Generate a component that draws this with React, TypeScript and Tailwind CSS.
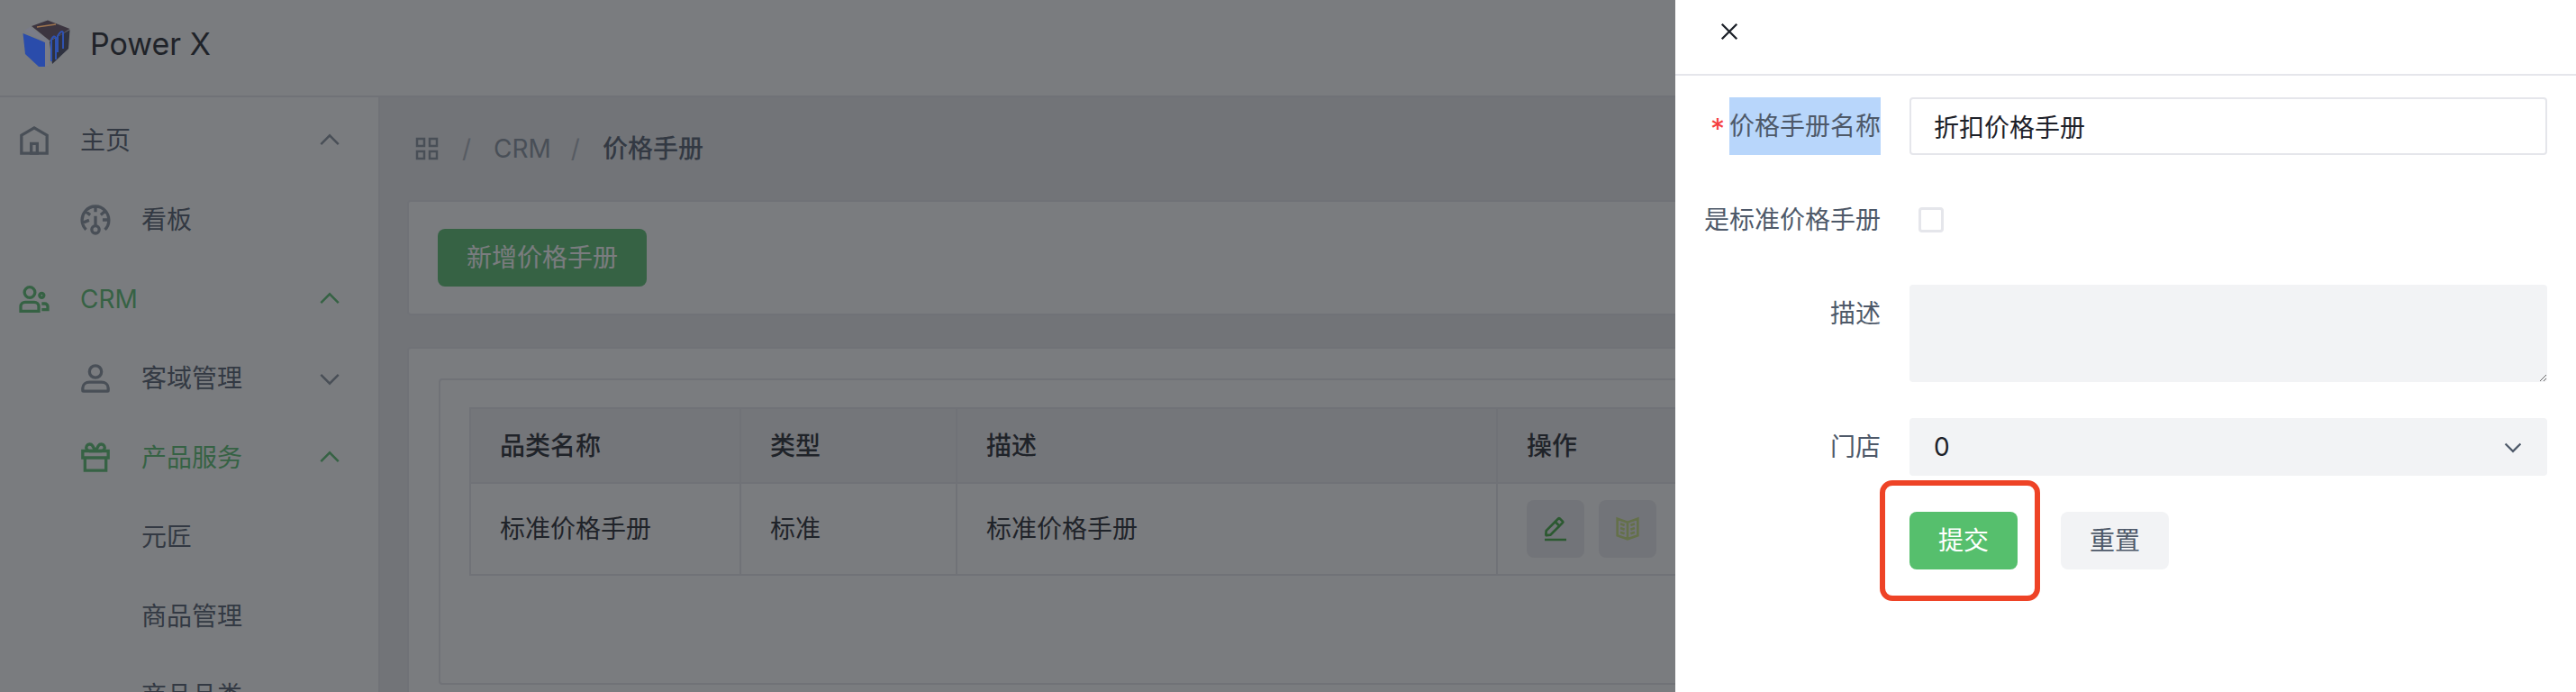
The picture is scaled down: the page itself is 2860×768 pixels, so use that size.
import type { ReactNode } from "react";

// arco-style stroke icons, all drawn on a 48 box
function Icon({ size, className, children }: { size: number; className?: string; children: ReactNode }) {
  return (
    <svg
      width={size}
      height={size}
      viewBox="0 0 48 48"
      fill="none"
      stroke="currentColor"
      strokeWidth={4}
      className={className}
    >
      {children}
    </svg>
  );
}

const HomeIcon = () => (
  <Icon size={40}>
    <path d="M7 17 24 7l17 10v24H7V17Z" />
    <path d="M20 28h8v13h-8V28Z" />
  </Icon>
);
const DashboardIcon = () => (
  <Icon size={40}>
    <path d="M41.8 24c.12 4.63-1.49 9.33-5.2 13m5.2-13h-8.3m8.3 0c-.11-4.38-1.77-8.69-4.62-12M24 6c5.53 0 10.07 2.4 13.18 6M24 6c-5.72 0-10.38 2.57-13.5 6.38M24 6v7.5M37.18 12 31 17.5m-20.5-5.12L17 17.5m-6.5-5.12C6.99 16.66 5.44 22.5 6.53 28m4.87 9c-2.65-2.6-4.22-5.74-4.87-9m0 0 8.97-3.5" />
    <path d="M24 32a5 5 0 1 0 0 10 5 5 0 0 0 0-10Zm0 0V19" />
  </Icon>
);
const UserGroupIcon = () => (
  <Icon size={40}>
    <circle cx="18" cy="15" r="7" />
    <circle cx="34" cy="19" r="3" />
    <path d="M6 34a6 6 0 0 1 6-6h12a6 6 0 0 1 6 6v6H6v-6ZM34 30h4a4 4 0 0 1 4 4v4h-8" />
  </Icon>
);
const UserIcon = () => (
  <Icon size={40}>
    <path d="M7 37c0-4.97 4.03-8 9-8h16c4.97 0 9 3.03 9 8v3a1 1 0 0 1-1 1H8a1 1 0 0 1-1-1v-3Z" />
    <circle cx="24" cy="15" r="8" />
  </Icon>
);
const GiftIcon = () => (
  <Icon size={40}>
    <path d="M7 15h34v9H7v-9ZM10 24v17h28V24" />
    <path d="M24 15h-8a4.5 4.5 0 1 1 4-7l4 7Zm0 0h8a4.5 4.5 0 1 0-4-7l-4 7Z" />
  </Icon>
);
const Chevron = ({ up, size = 30 }: { up?: boolean; size?: number }) => (
  <Icon size={size}>
    <path d={up ? "M39.6 30.557 24.043 15 8.487 30.557" : "M39.6 17.443 24.043 33 8.487 17.443"} />
  </Icon>
);

function Logo() {
  return (
    <svg width={56} height={56} viewBox="24 20 56 56" className="relative z-10 blur-[0.5px]">
      <path d="M35 29 53 22.500 77.500 32 67 39 55 45Z" fill="#3c3540" />
      <path d="M41 30 62 27" stroke="#a0764f" strokeWidth={1.500} />
      <path d="M55 46 77.500 33 76 54 58 71Z" fill="#2f3240" />
      <path d="M57 68V44Q60 38 62 42V66M64 58V40Q68 33 70 36V54" fill="none" stroke="#2f52b0" strokeWidth={2} />
      <path d="M25.500 37 50 47 50 74 43 74 28 60Z" fill="#2a4cab" />
      <path d="M26.500 34 33 30 54 45 54 73 50 74 50 47Z" fill="#7a7c88" />
    </svg>
  );
}

function MenuRow({
  label,
  icon,
  chevron,
  active,
  sub,
}: {
  label: string;
  icon?: ReactNode;
  chevron?: "up" | "down";
  active?: boolean;
  sub?: boolean;
}) {
  return (
    <div
      className={`flex h-[88px] shrink-0 items-center text-[28px] ${active ? "text-[#56bf6d]" : "text-[#4e5969]"} ${
        sub ? "pl-[86px]" : "pl-[18px]"
      }`}
    >
      {icon ? (
        <span className={`mr-[31px] flex shrink-0 ${active ? "text-[#56bf6d]" : "text-[#86909c]"}`}>{icon}</span>
      ) : (
        <span className="w-[71px]" />
      )}
      <span className="flex-1">{label}</span>
      {chevron && (
        <span className={`mr-[39px] flex ${active ? "text-[#56bf6d]" : "text-[#86909c]"}`}>
          <Chevron up={chevron === "up"} />
        </span>
      )}
    </div>
  );
}

function FormRow({ label, required, children }: { label: ReactNode; required?: boolean; children: ReactNode }) {
  return (
    <div className="mb-10 flex gap-8">
      <div className="flex h-16 w-[228px] shrink-0 items-center justify-end text-[28px] text-[#4e5969]">
        {required && <span className="mt-[8px] mr-[5px] text-[32px] leading-none text-[#f53f3f]">*</span>}
        {label}
      </div>
      <div className="min-w-0 flex-1">{children}</div>
    </div>
  );
}

export default function App() {
  return (
    <div className="relative flex h-[768px] w-[2860px] flex-col overflow-hidden bg-white font-['Inter','Noto_Sans_CJK_SC',sans-serif]">
      {/* Page under the drawer */}
      <header className="flex h-[108px] shrink-0 items-center border-b-2 border-[#e5e6eb] pb-[10px] pl-6">
        <Logo />
        <span className="ml-[20px] text-[34px] text-[#1d2129]">Power X</span>
      </header>

      <div className="flex min-h-0 flex-1">
        <aside className="flex w-[422px] shrink-0 flex-col overflow-hidden border-r-2 border-[#e5e6eb] pt-1">
          <MenuRow label="主页" icon={<HomeIcon />} chevron="up" />
          <MenuRow label="看板" icon={<DashboardIcon />} sub />
          <MenuRow label="CRM" icon={<UserGroupIcon />} chevron="up" active />
          <MenuRow label="客域管理" icon={<UserIcon />} chevron="down" sub />
          <MenuRow label="产品服务" icon={<GiftIcon />} chevron="up" active sub />
          <MenuRow label="元匠" sub />
          <MenuRow label="商品管理" sub />
          <MenuRow label="商品品类" sub />
        </aside>

        <main className="min-w-0 flex-1 overflow-hidden bg-[#ebebee] px-[30px]">
          <nav className="flex h-[114px] items-center text-[28px] text-[#86909c]">
            <svg width={26} height={26} viewBox="0 0 26 26" fill="none" stroke="currentColor" strokeWidth={2.500} className="ml-[9px]">
              <path d="M2 2h8v8H2zM16 2h8v8h-8zM2 16h8v8H2zM16 16h8v8h-8z" />
            </svg>
            <span className="ml-[26px] text-[#a9aeb8]">/</span>
            <span className="ml-[25px]">CRM</span>
            <span className="ml-[22px] text-[#a9aeb8]">/</span>
            <span className="ml-[25px] font-medium text-[#4e5969]">价格手册</span>
          </nav>

          <section className="rounded border-2 border-[#e5e6eb] bg-white px-8 py-[30px]">
            <button className="flex h-16 w-[232px] items-center justify-center rounded-lg bg-[#56bf6d] text-[28px] text-white">
              新增价格手册
            </button>
          </section>

          <section className="mt-[35px] h-[500px] rounded border-2 border-[#e5e6eb] bg-white px-[33px] pt-[33px]">
            <div className="h-[340px] rounded border-2 border-[#e5e6eb] px-[32px] pt-[30px]">
              <table className="w-full table-fixed border-collapse text-left text-[28px] text-[#1d2129]">
                <thead>
                  <tr className="h-[83px] bg-[#f0f0f2]">
                    <th className="w-[300px] border-2 border-[#e5e6eb] pl-[32px] font-medium">品类名称</th>
                    <th className="w-[240px] border-2 border-[#e5e6eb] pl-[32px] font-medium">类型</th>
                    <th className="w-[600px] border-2 border-[#e5e6eb] pl-[32px] font-medium">描述</th>
                    <th className="border-2 border-[#e5e6eb] pl-[32px] font-medium">操作</th>
                  </tr>
                </thead>
                <tbody>
                  <tr className="h-[102px]">
                    <td className="border-2 border-[#e5e6eb] pl-[32px]">标准价格手册</td>
                    <td className="border-2 border-[#e5e6eb] pl-[32px]">标准</td>
                    <td className="border-2 border-[#e5e6eb] pl-[32px]">标准价格手册</td>
                    <td className="border-2 border-[#e5e6eb] pl-[32px]">
                      <div className="flex gap-4">
                        <button className="flex size-16 items-center justify-center rounded-lg bg-[#ececef] text-[#3ea73e]">
                          <Icon size={32}>
                            <path d="m30.48 19.04 5.73-5.74a1 1 0 0 0 0-1.41l-5.58-5.59a1 1 0 0 0-1.42 0l-5.73 5.74m7 7L15.76 33.75a1 1 0 0 1-.59.29l-6.05.7A1 1 0 0 1 8 33.68l.48-6.31a1 1 0 0 1 .29-.63l14.7-14.7m7 7-7-7M6 42h36" />
                          </Icon>
                        </button>
                        <button className="flex size-16 items-center justify-center rounded-lg bg-[#ececef] text-[#c8e07a]">
                          <Icon size={32}>
                            <path d="M24 13 7 7v28l17 6 17-6V7l-17 6Zm0 0v27.500M29 18l7-2.500M29 25l7-2.500M29 32l7-2.500M19 18l-7-2.500m7 9.500-7-2.500m7 9.500-7-2.500" />
                          </Icon>
                        </button>
                      </div>
                    </td>
                  </tr>
                </tbody>
              </table>
            </div>
          </section>
        </main>
      </div>

      {/* Mask */}
      <div className="absolute inset-0 bg-[#22242a]/60" />

      {/* Drawer */}
      <div className="absolute top-0 right-0 bottom-0 flex w-[1000px] flex-col bg-white">
        <div className="h-[84px] shrink-0 border-b-2 border-[#e5e6eb] pt-[21px] pl-[46px] text-[#1d2129]">
          <Icon size={28}>
            <path d="M9.857 9.858 24 24m0 0 14.142 14.142M9.857 38.142 24 24m0 0 14.142-14.142" />
          </Icon>
        </div>

        <form className="pt-6 pr-8">
          <FormRow
            required
            label={<span className="inline-block h-16 bg-[#b8d6fb] leading-[64px]">价格手册名称</span>}
          >
            <input
              readOnly
              value="折扣价格手册"
              className="h-16 w-full rounded border-2 border-[#e5e6eb] bg-white px-[25px] text-[28px] text-[#1d2129] outline-none"
            />
          </FormRow>

          <FormRow label="是标准价格手册">
            <div className="flex h-16 items-center pl-[10px]">
              <div className="size-7 rounded border-[3px] border-[#e5e6eb] bg-white" />
            </div>
          </FormRow>

          <FormRow label="描述">
            <textarea className="block h-[108px] w-full rounded bg-[#f2f3f5] outline-none" />
          </FormRow>

          <FormRow label="门店">
            <div className="flex h-16 items-center justify-between rounded bg-[#f2f3f5] pr-[25px] pl-[27px] text-[28px] text-[#1d2129]">
              <span>0</span>
              <span className="flex text-[#4e5969]">
                <Chevron size={26} />
              </span>
            </div>
          </FormRow>

          <div className="flex gap-12 pl-[260px]">
            <button type="button" className="flex h-16 w-[120px] items-center justify-center rounded-lg bg-[#56bf6d] text-[28px] text-white">
              提交
            </button>
            <button type="button" className="flex h-16 w-[120px] items-center justify-center rounded-lg bg-[#f2f3f5] text-[28px] text-[#4e5969]">
              重置
            </button>
          </div>
        </form>

        {/* Red annotation around the submit button */}
        <div className="absolute top-[533px] left-[227px] h-[134px] w-[178px] rounded-[14px] border-[6px] border-[#ee4326]" />
      </div>
    </div>
  );
}
